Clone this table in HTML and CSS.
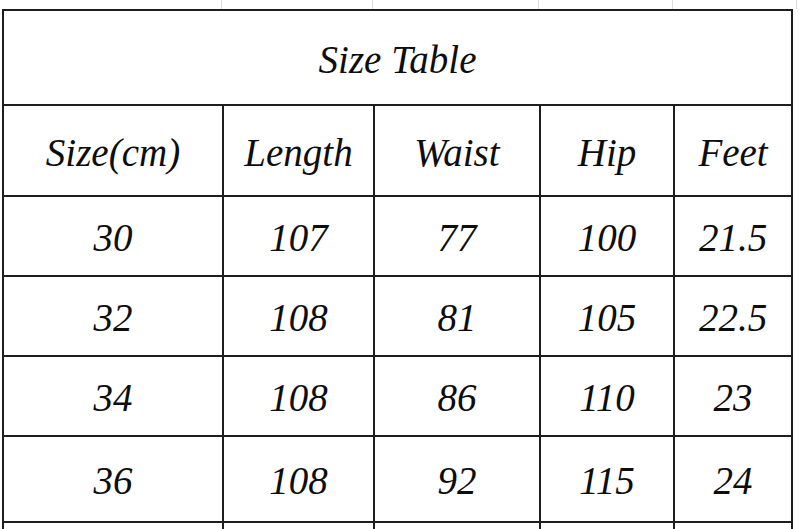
FILE: index.html
```html
<!DOCTYPE html>
<html>
<head>
<meta charset="utf-8">
<link rel="stylesheet" href="styles.css">
</head>
<body>
<div class="sheet">
  <div class="gridtop">
    <span class="g g1"></span><span class="g g2"></span><span class="g g3"></span><span class="g g4"></span><span class="g g5"></span>
  </div>
  <table class="size-table">
    <colgroup>
      <col class="c1"><col class="c2"><col class="c3"><col class="c4"><col class="c5">
    </colgroup>
    <tr class="r-title"><td colspan="5">Size Table</td></tr>
    <tr class="r-head"><td>Size(cm)</td><td>Length</td><td>Waist</td><td>Hip</td><td>Feet</td></tr>
    <tr class="r-data"><td>30</td><td>107</td><td>77</td><td>100</td><td>21.5</td></tr>
    <tr class="r-data"><td>32</td><td>108</td><td>81</td><td>105</td><td>22.5</td></tr>
    <tr class="r-data"><td>34</td><td>108</td><td>86</td><td>110</td><td>23</td></tr>
    <tr class="r-last"><td>36</td><td>108</td><td>92</td><td>115</td><td>24</td></tr>
    <tr class="r-extra"><td></td><td></td><td></td><td></td><td></td></tr>
  </table>
</div>
</body>
</html>
```

FILE: styles.css
```css
html, body {
  margin: 0;
  padding: 0;
  background: #ffffff;
  overflow: hidden;
}

.sheet {
  width: 800px;
  height: 529px;
  overflow: hidden;
  background: #ffffff;
}

.gridtop {
  display: grid;
  grid-template-columns: 222px 151px 166px 134px 124px 3px;
  height: 9px;
}

.g {
  display: block;
  border-right: 1px solid #dcdcdc;
}

.size-table {
  margin-left: 2px;
  border-collapse: collapse;
  table-layout: fixed;
  width: 791px;
  font-family: "Liberation Serif", "Times New Roman", serif;
  font-style: italic;
  font-size: 39px;
  color: #0d0d0d;
}

.c1 { width: 220px; }
.c2 { width: 151px; }
.c3 { width: 166px; }
.c4 { width: 134px; }
.c5 { width: 118px; }

.size-table td {
  border: 2px solid #1e1e1e;
  text-align: center;
  vertical-align: middle;
  padding: 3px 0 0 0;
  line-height: 1;
}

.r-title td { height: 90px; }
.r-head td { height: 86px; }
.r-data td { height: 75px; }
.r-last td { height: 81px; }
.r-extra td { height: 57px; }
```
